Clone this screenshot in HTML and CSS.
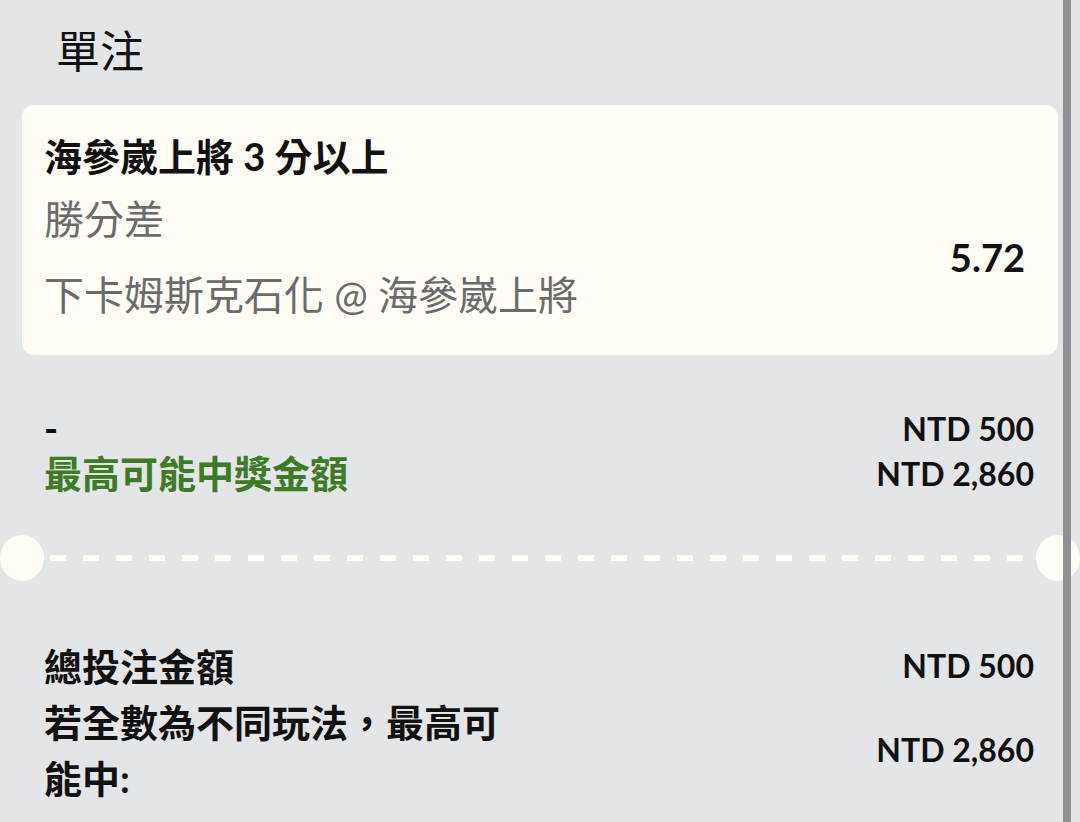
FILE: index.html
```html
<!DOCTYPE html>
<html lang="zh-Hant">
<head>
  <meta charset="UTF-8">
  <meta name="viewport" content="width=device-width, initial-scale=1">
  <title>單注</title>
  <link rel="stylesheet" href="styles.css">
</head>
<body>

<div class="slip">
  <h2 class="slip-title">單注</h2>

  <div class="card">
    <div class="card-title">海參崴上將 3 分以上</div>
    <div class="card-body">
      <div class="card-info">
        <div class="market">勝分差</div>
        <div class="event">下卡姆斯克石化 @ 海參崴上將</div>
      </div>
      <div class="odds">5.72</div>
    </div>
  </div>

  <div class="stake">
    <div class="label">-</div>
    <div class="value">NTD 500</div>
    <div class="label win">最高可能中獎金額</div>
    <div class="value">NTD 2,860</div>
  </div>

  <div class="divider">
    <span class="notch"></span>
    <span class="dashes"></span>
    <span class="notch"></span>
  </div>

  <div class="summary">
    <div class="label">總投注金額</div>
    <div class="value">NTD 500</div>
    <div class="label">若全數為不同玩法，最高可能中:</div>
    <div class="value">NTD 2,860</div>
  </div>
</div>

<div class="scrollbar"></div>

</body>
</html>
```

FILE: styles.css
```css
body {
  margin: 0;
  padding: 0;
  background-color: #e4e5e7;
  font-family: Lato, 'Noto Sans CJK TC', sans-serif;
  color: #111111;
  height: 822px;
  overflow: hidden;
}

.slip-title {
  margin: 0;
  padding-left: 56px;
  height: 105px;
  line-height: 102px;
  font-size: 44px;
  font-weight: 400;
}

.card {
  margin: 0 22px;
  height: 250px;
  box-sizing: border-box;
  padding: 20px 33px 0 22px;
  background-color: #fffdf6;
  border-radius: 12px;
}

.card-title {
  font-size: 38px;
  font-weight: 700;
  line-height: 62px;
}

.card-body {
  display: flex;
  justify-content: space-between;
  align-items: center;
}

.market,
.event {
  font-size: 40px;
  line-height: 64px;
  color: #6b6b6b;
}

.event {
  margin-top: 12px;
}

.odds {
  font-size: 38px;
  font-weight: 700;
}

.stake {
  display: grid;
  grid-template-columns: 1fr auto;
  padding: 51px 46px 0 44px;
  line-height: 45px;
}

.stake .label,
.summary .label {
  font-size: 38px;
  font-weight: 700;
}

.value {
  font-size: 32px;
  font-weight: 700;
  text-align: right;
}

.win {
  color: #3d7b27;
}

.divider {
  display: flex;
  align-items: center;
  height: 46px;
  margin-top: 39px;
}

.notch {
  width: 44px;
  height: 46px;
  border-radius: 50%;
  background-color: #fffdf6;
  flex: none;
}

.dashes {
  flex: 1;
  height: 6px;
  margin: 0 6px;
  background: repeating-linear-gradient(90deg, #fffdf6 0 16px, transparent 16px 33px);
}

.summary {
  display: grid;
  grid-template-columns: 480px 1fr;
  align-items: center;
  padding: 57px 46px 0 44px;
  line-height: 56px;
}

.scrollbar {
  position: absolute;
  top: 0;
  left: 1063px;
  width: 8px;
  height: 822px;
  background-color: #919195;
}
```
